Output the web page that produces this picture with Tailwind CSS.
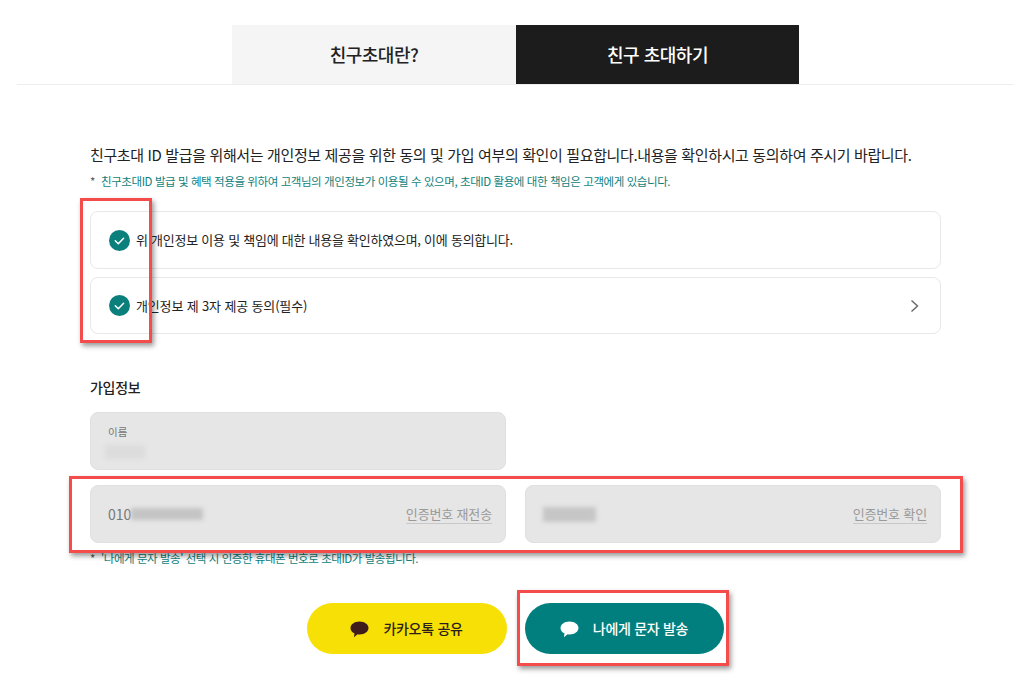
<!DOCTYPE html>
<html lang="ko">
<head>
    <meta charset="UTF-8">
    <title>친구 초대하기</title>
    <script src="https://cdn.jsdelivr.net/npm/@tailwindcss/browser@4"></script>
</head>
<body class="bg-white text-[#222] font-['Noto_Sans_CJK_KR','Noto_Sans',sans-serif]">
    <div class="relative h-[696px] w-[1024px] overflow-hidden pt-[25px]">
        <!-- tabs -->
        <div class="mx-[17px] flex h-[60px] w-[997px] justify-center border-b border-[#eeeeee]">
            <div class="flex h-[59px] w-[284px] items-center justify-center bg-[#f5f5f5] text-[18px] font-medium tracking-[-0.5px]">친구초대란?</div>
            <div class="flex h-[59px] w-[283px] items-center justify-center bg-[#1c1c1c] text-[18px] font-medium tracking-[-0.5px] text-white">친구 초대하기</div>
        </div>

        <div class="ml-[90px] w-[851px]">
            <p class="mt-[59px] h-[22px] whitespace-nowrap text-[15px] leading-[22px] tracking-[-0.37px]">친구초대 ID 발급을 위해서는 개인정보 제공을 위한 동의 및 가입 여부의 확인이 필요합니다.내용을 확인하시고 동의하여 주시기 바랍니다.</p>
            <p class="mt-[7px] flex h-[16px] whitespace-nowrap text-[11.5px] leading-[16px] tracking-[-0.42px] text-[#0f7f7d]"><span class="w-[11px] text-[#555]">*</span>친구초대ID 발급 및 혜택 적용을 위하여 고객님의 개인정보가 이용될 수 있으며, 초대ID 활용에 대한 책임은 고객에게 있습니다.</p>

            <div class="mt-[22px] flex h-[58px] items-center rounded-[8px] border border-[#e8e8e8] pl-[18px]">
                <svg class="h-[21px] w-[21px]" viewBox="0 0 21 21"><circle cx="10.5" cy="10.5" r="10.5" fill="#0b7f7c"/><path d="M6.3 10.8l3 2.9 5.300-5.500" fill="none" stroke="#fff" stroke-width="1.5" stroke-linecap="round" stroke-linejoin="round"/></svg>
                <span class="ml-[6px] text-[13px] tracking-[-0.25px]">위 개인정보 이용 및 책임에 대한 내용을 확인하였으며, 이에 동의합니다.</span>
            </div>
            <div class="mt-[8px] flex h-[57px] items-center rounded-[8px] border border-[#e8e8e8] pl-[18px] pr-[21px]">
                <svg class="h-[21px] w-[21px]" viewBox="0 0 21 21"><circle cx="10.5" cy="10.5" r="10.5" fill="#0b7f7c"/><path d="M6.3 10.8l3 2.9 5.300-5.500" fill="none" stroke="#fff" stroke-width="1.5" stroke-linecap="round" stroke-linejoin="round"/></svg>
                <span class="ml-[6px] text-[13px] tracking-[-0.15px]">개인정보 제 3자 제공 동의(필수)</span>
                <svg class="ml-auto h-[14px] w-[9px]" viewBox="0 0 9 14"><path d="M1.5 1.5l6 5.500-6 5.500" fill="none" stroke="#666" stroke-width="1.4"/></svg>
            </div>

            <h2 class="mt-[42px] h-[22px] text-[14px] font-medium leading-[22px] tracking-[-0.3px]">가입정보</h2>

            <div class="relative mt-[14px] h-[58px] w-[416px] rounded-[8px] border border-[#e0e0e0] bg-[#e6e6e6] pl-[17px] pt-[11px]">
                <div class="text-[10.5px] leading-[16px] text-[#777]">이름</div>
                <div class="absolute left-[14px] top-[32px] h-[14px] w-[40px] bg-[#dcdcdc] blur-[2px]"></div>
            </div>

            <div class="mt-[15px] flex gap-[19px]">
                <div class="flex h-[58px] w-[416px] items-center rounded-[8px] border border-[#e0e0e0] bg-[#e6e6e6] pl-[17px] pr-[13px]">
                    <span class="text-[14px] text-[#777]">010</span>
                    <span class="h-[12px] w-[72px] bg-[#c4c4c4] blur-[2px]"></span>
                    <span class="ml-auto border-b border-[#c8c8c8] text-[13px] leading-[18px] tracking-[-0.15px] text-[#999]">인증번호 재전송</span>
                </div>
                <div class="flex h-[58px] w-[416px] items-center rounded-[8px] border border-[#e0e0e0] bg-[#e6e6e6] pl-[17px] pr-[13px]">
                    <span class="h-[15px] w-[53px] bg-[#c6c6c6] blur-[2px]"></span>
                    <span class="ml-auto border-b border-[#c8c8c8] text-[13px] leading-[18px] tracking-[-0.15px] text-[#999]">인증번호 확인</span>
                </div>
            </div>

            <p class="mt-[7px] flex h-[16px] whitespace-nowrap text-[11.5px] leading-[16px] tracking-[-0.45px] text-[#0f7f7d]"><span class="w-[11px] text-[#555]">*</span>'나에게 문자 발송' 선택 시 인증한 휴대폰 번호로 초대ID가 발송됩니다.</p>

            <div class="mt-[37px] flex justify-center gap-[18px] pr-[1px]">
                <button class="flex h-[51px] w-[200px] items-center justify-center gap-[14px] rounded-full bg-[#f7e005] text-[14px] font-medium tracking-[-0.3px] text-[#2b1d1d]">
                    <svg class="mt-[2px] h-[17px] w-[19px]" viewBox="0 0 19 17"><path d="M9.5 0.5C4.5 0.5 0.5 3.4 0.5 7c0 2.3 1.6 4.3 4 5.5l-.6 3.8 3.7-3c.6.1 1.3.2 1.9.2 5 0 9-2.9 9-6.5S14.500.5 9.500.5z" fill="#3f1d1d"/></svg>
                    <span>카카오톡 공유</span>
                </button>
                <button class="flex h-[51px] w-[199px] items-center justify-center gap-[14px] rounded-full bg-[#017f7e] text-[14px] font-medium tracking-[-0.3px] text-white">
                    <svg class="mt-[2px] h-[17px] w-[19px]" viewBox="0 0 19 17"><path d="M9.5 0.5C4.5 0.5 0.5 3.4 0.5 7c0 2.3 1.6 4.3 4 5.5l-.6 3.8 3.7-3c.6.1 1.3.2 1.9.2 5 0 9-2.9 9-6.5S14.500.5 9.500.5z" fill="#fff"/></svg>
                    <span>나에게 문자 발송</span>
                </button>
            </div>
        </div>

        <!-- red annotation boxes drawn over the screenshot -->
        <div class="absolute left-[80px] top-[198px] h-[145px] w-[72px] border-[3px] border-[#f44b4b] shadow-[2px_3px_5px_rgba(0,0,0,0.4)]"></div>
        <div class="absolute left-[69px] top-[476px] h-[77px] w-[894px] border-[3px] border-[#f44b4b] shadow-[2px_3px_5px_rgba(0,0,0,0.4)]"></div>
        <div class="absolute left-[517px] top-[590px] h-[76px] w-[212px] border-[3px] border-[#f44b4b] shadow-[2px_3px_5px_rgba(0,0,0,0.4)]"></div>
    </div>
</body>
</html>
